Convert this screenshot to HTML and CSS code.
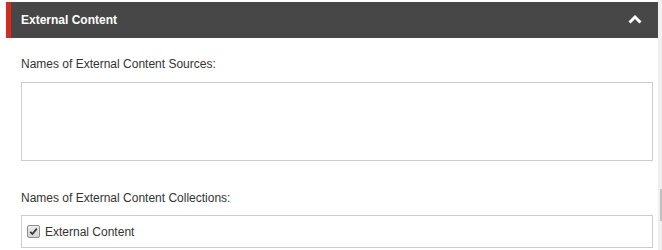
FILE: index.html
```html
<!DOCTYPE html>
<html>
<head>
<meta charset="utf-8">
<link rel="stylesheet" href="styles.css">
</head>
<body>
<div class="page">
  <div class="panel">
    <div class="panel-header">
      <span class="panel-title">External Content</span>
      <svg class="chevron" width="14" height="10" viewBox="0 0 14 10"><path d="M1.5 8.5 L7 3 L12.5 8.5" fill="none" stroke="#fff" stroke-width="3"/></svg>
    </div>
    <div class="panel-body">
      <label class="field-label">Names of External Content Sources:</label>
      <div class="textarea"></div>
      <label class="field-label second">Names of External Content Collections:</label>
      <div class="list-box">
        <span class="check"><svg width="9" height="9" viewBox="0 0 9 9"><path d="M1.2 4.8 L3.4 7 L7.8 1.6" fill="none" stroke="#3a3a3a" stroke-width="1.8"/></svg></span>
        <span class="check-label">External Content</span>
      </div>
    </div>
  </div>
  <div class="scrollbar"><div class="thumb"></div></div>
</div>
</body>
</html>
```
FILE: styles.css
```css
html, body {
  margin: 0;
  padding: 0;
  background: #fff;
  width: 662px;
  height: 250px;
  overflow: hidden;
}
.page {
  display: flex;
  width: 662px;
  height: 250px;
  font-family: "Liberation Sans", Arial, sans-serif;
  font-size: 12px;
  color: #333;
}
.panel {
  flex: 1;
  padding: 2px 0 0 6px;
}
.panel-header {
  height: 36px;
  background: #474747;
  border-left: 5px solid #d8291d;
  display: flex;
  align-items: center;
  justify-content: space-between;
  padding: 0 16px 0 10px;
}
.panel-title {
  color: #fff;
  font-weight: bold;
  font-size: 12px;
  margin-top: -1px;
}
.chevron {
  display: block;
  margin-top: -2px;
}
.panel-body {
  display: flex;
  flex-direction: column;
  padding: 19px 5px 0 15px;
}
.field-label {
  line-height: 14px;
  display: block;
}
.textarea {
  margin-top: 11px;
  height: 77px;
  border: 1px solid #ccc;
}
.field-label.second {
  margin-top: 30px;
}
.list-box {
  margin-top: 10px;
  height: 31px;
  border: 1px solid #ccc;
  display: flex;
  align-items: center;
  padding-left: 5px;
}
.check {
  width: 11px;
  height: 11px;
  border: 1px solid #8f8f8f;
  border-radius: 2px;
  background: linear-gradient(#ececec, #d4d4d4);
  display: flex;
  align-items: center;
  justify-content: center;
  margin-right: 5px;
}
.check svg { display: block; }
.check-label {
  line-height: 14px;
}
.scrollbar {
  width: 4px;
  background: #f0f0f0;
  position: relative;
}
.thumb {
  position: absolute;
  left: 2px;
  top: 189px;
  width: 2px;
  height: 32px;
  background: #c2c2c2;
}
```
